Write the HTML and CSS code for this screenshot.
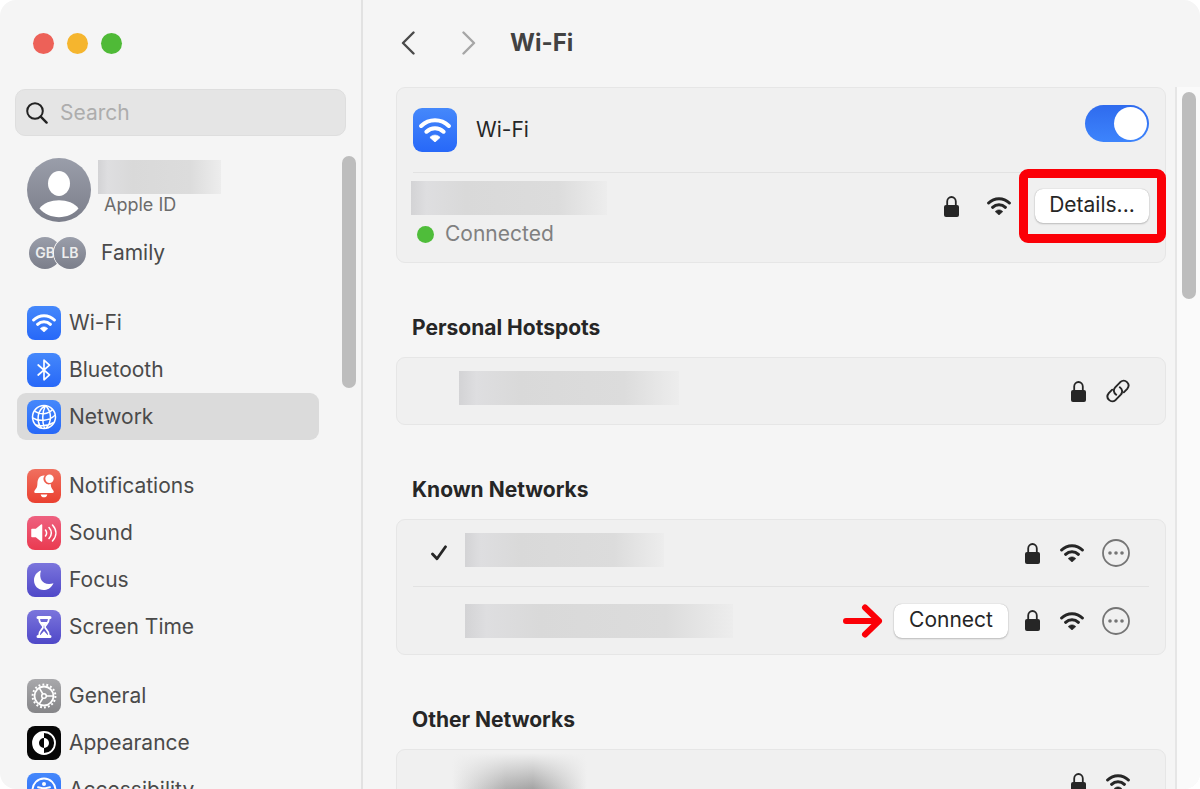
FILE: index.html
```html
<!DOCTYPE html>
<html lang="en">
<head>
  <meta charset="UTF-8">
  <title>Wi-Fi</title>
  <link rel="stylesheet" href="styles.css">
</head>
<body>

  <!-- shared icons -->
  <svg class="sprite" aria-hidden="true">
    <symbol id="wifi" viewBox="0 0 24 18">
      <path d="M1.6 6C7.400 .3 16.600 .3 22.400 6M5.600 10.300C9.200 6.800 14.800 6.800 18.400 10.300" fill="none" stroke="currentColor" stroke-width="3" stroke-linecap="round"/>
      <path d="M12 18L8.200 14.600C10.300 12.300 13.700 12.300 15.800 14.600Z" fill="currentColor" stroke="currentColor" stroke-width=".6" stroke-linejoin="round"/>
    </symbol>
    <symbol id="lock" viewBox="0 0 15 21">
      <path d="M3.200 10V5.500a4.300 4.500 0 0 1 8.600 0V10" fill="none" stroke="currentColor" stroke-width="1.800"/>
      <rect y="9" width="15" height="12" rx="2" fill="currentColor"/>
    </symbol>
    <symbol id="more" viewBox="0 0 28 28">
      <circle cx="14" cy="14" r="13" fill="none" stroke="currentColor" stroke-width="1.800"/>
      <circle cx="8" cy="14" r="1.800" fill="currentColor"/>
      <circle cx="14" cy="14" r="1.800" fill="currentColor"/>
      <circle cx="20" cy="14" r="1.800" fill="currentColor"/>
    </symbol>
  </svg>

  <div class="window">
    <aside class="sidebar">
      <div class="lights">
        <button class="light red" aria-label="Close"></button>
        <button class="light yellow" aria-label="Minimize"></button>
        <button class="light green" aria-label="Zoom"></button>
      </div>

      <label class="search">
        <svg width="22" height="22" viewBox="0 0 22 22" fill="none" stroke="#222" stroke-width="2" stroke-linecap="round" aria-hidden="true">
          <circle cx="9" cy="9" r="7.800"/><path d="M14.700 14.700L20.600 20.600" stroke-width="2.400"/>
        </svg>
        <input type="search" placeholder="Search" aria-label="Search">
      </label>

      <div class="side-body">
        <nav class="side-list">
          <a class="account" href="#">
            <svg class="avatar" viewBox="0 0 64 64" aria-hidden="true">
              <defs>
                <linearGradient id="grey" x2="0" y2="1"><stop stop-color="#9a9eaa"/><stop offset="1" stop-color="#7b7e8a"/></linearGradient>
              </defs>
              <circle cx="32" cy="32" r="32" fill="url(#grey)"/>
              <ellipse cx="32" cy="25.500" rx="11" ry="12.500" fill="#fff"/>
              <path d="M12.500 50.500C20 39.500 44 39.500 51.500 50.500C42 62 22 62 12.500 50.500Z" fill="#fff"/>
            </svg>
            <span class="account-text">
              <span class="mask mask-name"></span>
              <span class="account-sub">Apple ID</span>
            </span>
          </a>
          <a class="family" href="#">
            <span class="initials"><span>GB</span><span>LB</span></span>
            Family
          </a>

          <div class="group">
            <a class="item" href="#">
              <span class="tile blue"><svg width="24" height="18"><use href="#wifi"/></svg></span>Wi-Fi
            </a>
            <a class="item" href="#">
              <span class="tile blue">
                <svg width="14" height="22" viewBox="0 0 14 22" fill="none" stroke="#fff" stroke-width="1.700" stroke-linejoin="round" stroke-linecap="round"><path d="M1.200 6L12.500 15.800L7 20.800V1.200L12.500 6.200L1.200 16"/></svg>
              </span>Bluetooth
            </a>
            <a class="item selected" href="#" aria-current="page">
              <span class="tile blue">
                <svg width="26" height="26" viewBox="0 0 26 26" fill="none" stroke="#fff" stroke-width="1.500"><circle cx="13" cy="13" r="11.500"/><path d="M14.500 1.500C6 6 5 17 10.500 24.300M14.500 1.500C11 8 11 18 13.500 24.500M14.500 1.500C21 8 21 18 15 24.400M3.500 7.200C9 11 17 10.500 21.600 5.400M1.600 13.800C8 18 18 17 24.300 11M5 21C11 22.500 18 21.500 22.800 18.400"/></svg>
              </span>Network
            </a>
          </div>

          <div class="group">
            <a class="item" href="#">
              <span class="tile red-tile">
                <svg width="24" height="26" viewBox="0 0 24 26" fill="#fff"><path d="M12 2.500C7 2.800 5.600 6.500 5.400 10.500C5.200 15.500 3.700 15.500 2.400 18C1.900 19.300 2.500 20 3.500 20H20.500C21.500 20 22.100 19.300 21.600 18C20.400 15.700 19 15.500 18.700 11A5.300 5.300 0 0 1 12.800 2.600ZM8.700 21.500H15.300C14.800 25.300 9.200 25.300 8.700 21.500Z"/><circle cx="17.500" cy="5.800" r="4.200"/></svg>
              </span>Notifications
            </a>
            <a class="item" href="#">
              <span class="tile pink">
                <svg width="26" height="22" viewBox="0 0 26 22" fill="none" stroke="#fff" stroke-width="1.500" stroke-linecap="round"><path d="M1 7.500H5L10.500 3V19L5 14.500H1Z" fill="#fff" stroke-linejoin="round"/><path d="M14.500 8C16 10 16 12 14.500 14M18 5.500C21 9 21 13 18 16.500M21.500 3C26 8 26 14 21.500 19"/></svg>
              </span>Sound
            </a>
            <a class="item" href="#">
              <span class="tile purple">
                <svg width="22" height="22" viewBox="0 0 22 22" fill="#fff"><path d="M8 1.500C5 11 11 17 20.500 14.200C18 19.500 14 21 10.500 21C5 21 1 16.500 1 11.200C1 6.500 4 2.800 8 1.500Z"/></svg>
              </span>Focus
            </a>
            <a class="item" href="#">
              <span class="tile purple">
                <svg width="16" height="24" viewBox="0 0 16 24" fill="none" stroke="#fff" stroke-width="1.800"><path d="M2 2.500H14M2 21.500H14" stroke-width="3" stroke-linecap="round"/><path d="M3 3C3 9 7 9.500 7 12C7 14.500 3 15 3 21M13 3C13 9 9 9.500 9 12C9 14.500 13 15 13 21"/><path d="M4 7H12L8 11.500ZM4 20.500L8 16L12 20.500Z" fill="#fff" stroke="none"/></svg>
              </span>Screen Time
            </a>
          </div>

          <div class="group">
            <a class="item" href="#">
              <span class="tile grey">
                <svg width="26" height="26" viewBox="0 0 26 26" fill="none" stroke="#fff"><circle cx="13" cy="13" r="9.500" stroke-width="1.800"/><circle cx="13" cy="13" r="11.400" stroke-width="2" stroke-dasharray="1.900 2.080"/><circle cx="13" cy="13" r="2.300" stroke-width="1.500"/><path d="M15.300 13H22.500M11.900 11L8.200 4.800M11.900 15L8.200 21.200" stroke-width="1.600"/></svg>
              </span>General
            </a>
            <a class="item" href="#">
              <span class="tile black">
                <svg width="26" height="26" viewBox="0 0 26 26"><circle cx="13" cy="13" r="11" fill="none" stroke="#fff" stroke-width="1.800"/><path d="M13 2A11 11 0 0 0 13 24V18A5 5 0 0 1 13 8Z" fill="#fff"/><path d="M13 8A5 5 0 0 1 13 18Z" fill="#fff"/></svg>
              </span>Appearance
            </a>
            <a class="item" href="#">
              <span class="tile blue">
                <svg width="26" height="26" viewBox="0 0 26 26" fill="none" stroke="#fff" stroke-width="1.900" stroke-linecap="round"><circle cx="13" cy="13" r="11.500"/><circle cx="13" cy="7" r="2" fill="#fff" stroke="none"/><path d="M7 10.200L11.500 11.200H14.500L19 10.200M13 11.500V15M10.500 20L12 14.500H14L15.500 20"/></svg>
              </span>Accessibility
            </a>
          </div>
        </nav>
        <div class="thumb side-thumb"></div>
      </div>
    </aside>

    <main class="main">
      <header class="topbar">
        <button class="nav-btn" aria-label="Back">
          <svg width="14" height="24" viewBox="0 0 14 24"><path d="M12.500 1.500L2 12L12.500 22.500"/></svg>
        </button>
        <button class="nav-btn forward" aria-label="Forward">
          <svg width="14" height="24" viewBox="0 0 14 24"><path d="M1.500 1.500L12 12L1.500 22.500"/></svg>
        </button>
        <h1>Wi-Fi</h1>
      </header>

      <div class="pane">
        <div class="content">
          <section class="panel">
            <div class="row wifi-row">
              <span class="tile big blue"><svg width="32" height="24"><use href="#wifi"/></svg></span>
              <label for="wifi-on">Wi-Fi</label>
              <input type="checkbox" class="switch" id="wifi-on" checked>
            </div>
            <div class="row current-row">
              <div>
                <div class="mask mask-current"></div>
                <div class="status"><span class="dot"></span>Connected</div>
              </div>
              <div class="current-actions">
                <svg class="lock" width="15" height="21"><use href="#lock"/></svg>
                <svg class="wifi" width="24" height="18"><use href="#wifi"/></svg>
                <span class="marked"><button class="btn">Details...</button></span>
              </div>
            </div>
          </section>

          <h2>Personal Hotspots</h2>
          <section class="panel">
            <div class="row">
              <span class="check"></span>
              <span class="mask mask-hotspot"></span>
              <div class="actions">
                <svg class="lock" width="15" height="21"><use href="#lock"/></svg>
                <svg width="24" height="24" viewBox="0 0 24 24" fill="none" stroke="currentColor" stroke-width="1.900" stroke-linecap="round"><path d="M10.200 15.800C7.400 13.800 7.200 10.600 9.200 8.400L14.300 3.100C19 -.8 25.200 4.800 21.200 9.800L17.800 13.300"/><path d="M13.800 8.200C16.600 10.200 16.800 13.400 14.800 15.600L9.700 20.900C5 24.800 -1.200 19.200 2.800 14.200L6.200 10.700"/></svg>
              </div>
            </div>
          </section>

          <h2>Known Networks</h2>
          <section class="panel">
            <div class="row">
              <span class="check">
                <svg width="16" height="16" viewBox="0 0 16 16" fill="none" stroke="currentColor" stroke-width="2.800" stroke-linecap="round" stroke-linejoin="round"><path d="M1.500 9L6 13.800L14.500 1.800"/></svg>
              </span>
              <span class="mask mask-known"></span>
              <div class="actions">
                <svg class="lock" width="15" height="21"><use href="#lock"/></svg>
                <svg class="wifi" width="24" height="18"><use href="#wifi"/></svg>
                <button class="more" aria-label="More options"><svg width="28" height="28"><use href="#more"/></svg></button>
              </div>
            </div>
            <div class="row">
              <span class="check"></span>
              <span class="mask mask-known-2"></span>
              <div class="actions">
                <svg class="arrow" width="40" height="34" viewBox="0 0 40 34" fill="none" stroke="#fb0007" stroke-width="6" stroke-linecap="round" stroke-linejoin="round"><path d="M3 17H36M22 3.500L36 17L22 30.500"/></svg>
                <button class="btn">Connect</button>
                <svg class="lock" width="15" height="21"><use href="#lock"/></svg>
                <svg class="wifi" width="24" height="18"><use href="#wifi"/></svg>
                <button class="more" aria-label="More options"><svg width="28" height="28"><use href="#more"/></svg></button>
              </div>
            </div>
          </section>

          <h2>Other Networks</h2>
          <section class="panel">
            <div class="row">
              <span class="mask-other"></span>
              <div class="actions">
                <svg class="lock" width="15" height="21"><use href="#lock"/></svg>
                <svg class="wifi" width="24" height="18"><use href="#wifi"/></svg>
              </div>
            </div>
          </section>
        </div>

        <div class="track"><div class="thumb main-thumb"></div></div>
      </div>
    </main>
  </div>

</body>
</html>
```
FILE: styles.css
```css
* {
  box-sizing: border-box;
}

body {
  margin: 0;
  background: #fff;
  color: #262626;
  font-family: Inter, "Liberation Sans", sans-serif;
  font-size: 21px;
  line-height: 30px;
}

a {
  color: #4a4a4a;
  text-decoration: none;
}

button {
  font: inherit;
  color: inherit;
  border: 0;
  padding: 0;
  background: none;
}

svg {
  display: block;
  flex: none;
}

.sprite {
  position: absolute;
  width: 0;
  height: 0;
}

.window {
  display: flex;
  height: 100vh;
  overflow: hidden;
  background: #f5f5f5;
  border-radius: 16px;
}

/* sidebar */
.sidebar {
  display: flex;
  flex-direction: column;
  flex: none;
  width: 363px;
  border-right: 2px solid #e2e2e2;
}

.lights {
  display: flex;
  gap: 13px;
  padding: 33px 33px 35px;
}

.light {
  width: 21px;
  height: 21px;
  border-radius: 50%;
}

.red { background: #ed6158; }
.yellow { background: #f5b52e; }
.green { background: #4fba37; }

.search {
  display: flex;
  align-items: center;
  gap: 12px;
  height: 47px;
  margin: 0 15px;
  padding: 1px 10px 0;
  background: #e5e5e5;
  border: 1px solid #dedede;
  border-radius: 10px;
}

.search input {
  flex: 1;
  min-width: 0;
  border: 0;
  padding: 0;
  background: none;
  outline: none;
  font: inherit;
  color: #262626;
}

.search input::placeholder {
  color: #adadad;
}

.side-body {
  display: flex;
  flex: 1;
  min-height: 0;
  margin-top: 20px;
  padding: 0 5px 0 17px;
  gap: 23px;
}

.side-list {
  flex: 1;
  overflow: hidden;
}

.account {
  display: flex;
  gap: 7px;
  padding: 2px 10px 0;
}

.avatar {
  width: 64px;
  height: 64px;
}

.account-text {
  display: flex;
  flex-direction: column;
  padding-top: 2px;
}

.account-sub {
  padding-left: 6px;
  font-size: 18px;
  line-height: 22px;
  color: #6b6b6b;
}

.family {
  display: flex;
  align-items: center;
  gap: 15px;
  height: 62px;
  padding-left: 12px;
}

.initials {
  display: flex;
}

.initials span {
  width: 32px;
  height: 32px;
  border-radius: 50%;
  background: linear-gradient(#9a9eaa, #7b7e8a);
  color: #eee;
  font-size: 14px;
  font-weight: 600;
  line-height: 32px;
  text-align: center;
}

.initials span + span {
  margin-left: -7px;
  box-shadow: 0 0 0 1px #f5f5f5;
}

.group {
  margin: 15px 0 22px;
}

.group + .group {
  margin-top: 0;
}

.item {
  display: flex;
  align-items: center;
  gap: 8px;
  height: 47px;
  padding: 0 10px;
  border-radius: 9px;
}

.item.selected {
  background: #dbdbdb;
}

.tile {
  display: flex;
  flex: none;
  align-items: center;
  justify-content: center;
  width: 34px;
  height: 34px;
  border-radius: 8px;
  color: #fff;
}

.tile.big {
  width: 44px;
  height: 44px;
  border-radius: 9px;
}

.blue { background: linear-gradient(#4588fb, #2768f8); }
.red-tile { background: linear-gradient(#f0705f, #ea4030); }
.pink { background: linear-gradient(#ee6180, #ea3a50); }
.purple { background: linear-gradient(#7b75dc, #4f48c8); }
.grey { background: linear-gradient(#a8a8ab, #858588); }
.black { background: #060606; }

.thumb {
  width: 14px;
  background: #bdbdbd;
  border-radius: 7px;
}

.side-thumb {
  height: 232px;
}

/* main area */
.main {
  display: flex;
  flex-direction: column;
  flex: 1;
  min-width: 0;
}

.topbar {
  display: flex;
  align-items: center;
  flex: none;
  height: 87px;
  padding: 0 0 1px 38px;
}

.nav-btn {
  margin-right: 47px;
  color: #4a4a4a;
}

.nav-btn path {
  fill: none;
  stroke: currentColor;
  stroke-width: 2.4;
  stroke-linecap: round;
  stroke-linejoin: round;
}

.nav-btn.forward {
  margin-right: 34px;
  color: #a6a6a6;
}

h1 {
  margin: 0;
  font-size: 24px;
  font-weight: 700;
  color: #424242;
}

.pane {
  display: flex;
  flex: 1;
  min-height: 0;
}

.content {
  flex: 1;
  min-width: 0;
  overflow: hidden;
  padding: 0 9px 0 33px;
}

.track {
  width: 25px;
  padding: 5px;
  background: #fafafa;
  border-left: 2px solid #e6e6e6;
}

.main-thumb {
  height: 207px;
}

h2 {
  margin: 50px 16px 14px;
  font-size: 21px;
  font-weight: 700;
}

.panel {
  padding: 0 16px;
  background: #f0f0f0;
  border: 1px solid #e6e6e6;
  border-radius: 9px;
}

.row {
  display: flex;
  align-items: center;
  min-height: 66px;
}

.row + .row {
  min-height: 68px;
  border-top: 1px solid #e2e2e2;
}

.check {
  flex: none;
  width: 52px;
  padding-left: 18px;
}

.actions {
  display: flex;
  align-items: center;
  margin-left: auto;
  padding-right: 19px;
}

.lock {
  margin-right: 20px;
}

.actions .btn {
  margin-right: 17px;
}

.more {
  margin-left: 18px;
  color: #757575;
}

.arrow {
  margin-right: 11px;
}

.btn {
  min-width: 114px;
  height: 34px;
  padding: 0 12px 2px;
  background: #fff;
  border-radius: 8px;
  box-shadow: 0 0 1px rgba(0, 0, 0, 0.3), 0 1px 2px rgba(0, 0, 0, 0.2);
  white-space: nowrap;
}

.wifi-row {
  height: 84px;
}

.wifi-row label {
  margin-left: 19px;
}

.switch {
  appearance: none;
  display: flex;
  align-items: center;
  justify-content: flex-end;
  width: 64px;
  height: 37px;
  margin: 0 0 14px auto;
  padding: 0 2px;
  border-radius: 19px;
  background: linear-gradient(#2f6bee, #3d84fc);
}

.switch::before {
  content: "";
  width: 33px;
  height: 33px;
  border-radius: 50%;
  background: #fff;
}

.switch:not(:checked) {
  justify-content: flex-start;
  background: #c8c8c8;
}

.row.current-row {
  align-items: flex-start;
  justify-content: space-between;
  height: 90px;
  padding-top: 8px;
}

.status {
  display: flex;
  align-items: center;
  gap: 11px;
  margin-top: 4px;
  padding-left: 4px;
  color: #808080;
}

.dot {
  width: 17px;
  height: 17px;
  border-radius: 50%;
  background: #4fbd3a;
}

.current-actions {
  display: flex;
  align-items: center;
  padding-top: 8px;
}

.current-actions .lock {
  margin-right: 28px;
}

.current-actions .wifi {
  margin-right: 24px;
}

/* red box drawn around the Details button */
.marked {
  position: relative;
  display: flex;
}

.marked::after {
  content: "";
  position: absolute;
  inset: -20px -17px -20px -16px;
  border: 9px solid #fb0007;
  border-radius: 9px;
  pointer-events: none;
}

/* hidden names */
.mask {
  flex: none;
  height: 34px;
  background: linear-gradient(90deg, #d3d3d5, #dedee0 8%, #d9d9d9 28%, #dcdcdc 75%, #ededed);
}

.mask-name { width: 123px; }
.mask-current { width: 196px; margin-left: -2px; }
.mask-hotspot { width: 220px; margin: 0 0 6px -6px; }
.mask-known { width: 199px; margin-bottom: 6px; }
.mask-known-2 { width: 268px; }

.mask-other {
  width: 135px;
  height: 60px;
  margin-left: 39px;
  background:
    linear-gradient(#f0f0f0, transparent 80%),
    linear-gradient(90deg, #f0f0f0, #9a9a9a 40%, #8a8a8a 60%, #f0f0f0);
}
```
